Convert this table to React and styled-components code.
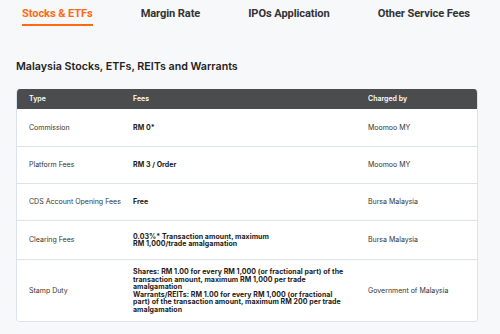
import React from "react";
import styled, { createGlobalStyle } from "styled-components";

const Global = createGlobalStyle`
  html, body { margin: 0; padding: 0; background: #f7f8fa; }
  body { font-family: Inter, "Noto Sans", sans-serif; color: #333; }
`;

const Page = styled.div`
  width: 500px;
  height: 334px;
  background: #f7f8fa;
  overflow: hidden;
`;

const Tabs = styled.nav`
  display: flex;
  gap: 48px;
  padding: 7px 0 0 22px;
  height: 26px;
  box-sizing: border-box;
`;

const Tab = styled.div`
  font-family: Roboto, sans-serif;
  font-weight: 700;
  font-size: 11.1px;
  letter-spacing: -0.1px;
  line-height: 14px;
  color: ${(p) => (p.$active ? "#ff6a13" : "#333")};
  border-bottom: 2px solid ${(p) => (p.$active ? "#ff6a13" : "transparent")};
  height: 19px;
  box-sizing: border-box;
`;

const Heading = styled.h2`
  margin: 0;
  padding: 34px 0 0 16px;
  font-family: Inter, sans-serif;
  font-weight: 600;
  font-size: 10.7px;
  line-height: 14px;
  color: #222;
`;

const Table = styled.div`
  margin: 15px 0 0 16px;
  width: 460px;
  border: 1px solid #dde3ea;
  border-top: none;
  border-radius: 4px;
  overflow: hidden;
  background: #fff;
`;

const Row = styled.div`
  display: grid;
  grid-template-columns: 104px 235px 1fr;
  height: ${(p) => p.$h}px;
  align-items: center;
  border-top: ${(p) => (p.$first ? "none" : "1px solid #dde3ea")};
  box-sizing: border-box;
  background: ${(p) => (p.$head ? "#4b4c4e" : "#fff")};
  color: ${(p) => (p.$head ? "#fff" : "#333")};
`;

const Cell = styled.div`
  padding: 0 4px 0 12px;
  font-size: 7px;
  line-height: 7.5px;
  white-space: ${(p) => (p.$bold ? "normal" : "nowrap")};
  font-weight: ${(p) => (p.$bold ? 700 : 400)};
  color: ${(p) => (p.$bold ? "#1a1a1a" : "inherit")};
  letter-spacing: ${(p) => (p.$bold ? "0.05px" : "0")};
`;

const HeadCell = styled(Cell)`
  font-weight: 600;
  color: #fff;
`;

const rows = [
  { type: "Commission", fees: ["RM 0*"], by: "Moomoo MY", h: 37 },
  { type: "Platform Fees", fees: ["RM 3 / Order"], by: "Moomoo MY", h: 37 },
  { type: "CDS Account Opening Fees", fees: ["Free"], by: "Bursa Malaysia", h: 37 },
  {
    type: "Clearing Fees",
    fees: ["0.03%* Transaction amount, maximum", "RM 1,000/trade amalgamation"],
    by: "Bursa Malaysia",
    h: 39,
  },
  {
    type: "Stamp Duty",
    fees: [
      "Shares: RM 1.00 for every RM 1,000 (or fractional part) of the",
      "transaction amount, maximum RM 1,000 per trade",
      "amalgamation",
      "Warrants/REITs: RM 1.00 for every RM 1,000 (or fractional",
      "part) of the transaction amount, maximum RM 200 per trade",
      "amalgamation",
    ],
    by: "Government of Malaysia",
    h: 62,
  },
];

export default function App() {
  return (
    <Page>
      <Global />
      <Tabs>
        <Tab $active>Stocks &amp; ETFs</Tab>
        <Tab>Margin Rate</Tab>
        <Tab>IPOs Application</Tab>
        <Tab>Other Service Fees</Tab>
      </Tabs>
      <Heading>Malaysia Stocks, ETFs, REITs and Warrants</Heading>
      <Table>
        <Row $head $first $h={20}>
          <HeadCell>Type</HeadCell>
          <HeadCell>Fees</HeadCell>
          <HeadCell>Charged by</HeadCell>
        </Row>
        {rows.map((r, i) => (
          <Row key={r.type} $h={r.h} $first={i === 0}>
            <Cell>{r.type}</Cell>
            <Cell $bold>
              {r.fees.map((f, j) => (
                <div key={j}>{f}</div>
              ))}
            </Cell>
            <Cell>{r.by}</Cell>
          </Row>
        ))}
      </Table>
    </Page>
  );
}
